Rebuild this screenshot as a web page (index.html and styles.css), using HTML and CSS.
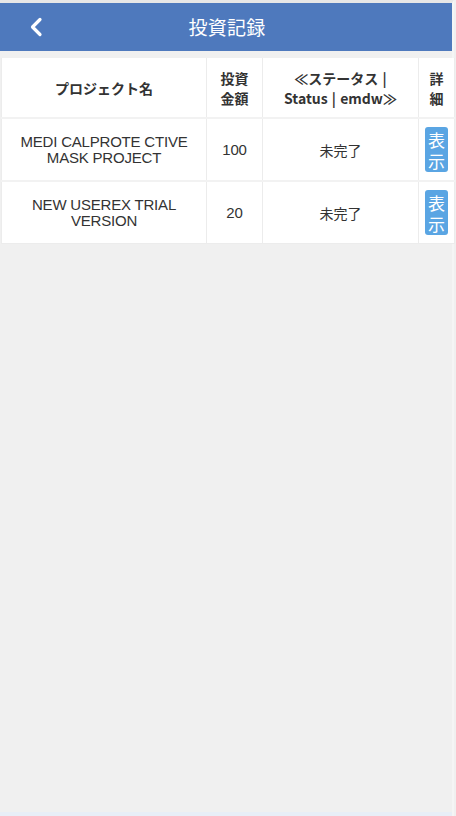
FILE: index.html
```html
<!DOCTYPE html>
<html lang="ja">
<head>
<meta charset="utf-8">
<title>投資記録</title>
<link rel="stylesheet" href="styles.css">
</head>
<body>
<div class="page">
  <header class="appbar">
    <a class="back" href="#" aria-label="戻る">
      <svg width="14" height="20" viewBox="0 0 14 20"><path d="M11 2.5 L3.5 10 L11 17.5" fill="none" stroke="#fff" stroke-width="3.2" stroke-linecap="round" stroke-linejoin="round"/></svg>
    </a>
    <h1 class="title">投資記録</h1>
  </header>
  <main class="content">
    <table class="records">
      <colgroup>
        <col class="c-name"><col class="c-amount"><col class="c-status"><col class="c-detail">
      </colgroup>
      <thead>
        <tr>
          <th>プロジェクト名</th>
          <th>投資<br>金額</th>
          <th class="status-head">≪ステータス | Status | emdw≫</th>
          <th>詳<br>細</th>
        </tr>
      </thead>
      <tbody>
        <tr>
          <td class="latin">MEDI CALPROTE CTIVE MASK PROJECT</td>
          <td class="latin">100</td>
          <td class="jp">未完了</td>
          <td class="btn-cell"><a class="btn" href="#">表示</a></td>
        </tr>
        <tr>
          <td class="latin">NEW USEREX TRIAL VERSION</td>
          <td class="latin">20</td>
          <td class="jp">未完了</td>
          <td class="btn-cell"><a class="btn" href="#">表示</a></td>
        </tr>
      </tbody>
    </table>
  </main>
  <div class="footer-strip"></div>
</div>
</body>
</html>
```

FILE: styles.css
```css
html, body {
  margin: 0;
  padding: 0;
  height: 100%;
}
body {
  background: #f0f0f0;
  font-family: "Liberation Sans", "Noto Sans CJK JP", sans-serif;
  color: #333;
}
.page {
  width: 454px;
  height: 816px;
  display: flex;
  flex-direction: column;
  border-top: 3px solid #e7e7e7;
  box-sizing: border-box;
  border-right: 2px solid #f5f5f5;
}
.appbar {
  height: 48px;
  background: #4e79bd;
  display: flex;
  align-items: center;
  position: relative;
  flex: none;
}
.back {
  position: absolute;
  left: 29px;
  top: 14px;
  display: block;
  line-height: 0;
}
.title {
  margin: 0;
  width: 100%;
  text-align: center;
  color: #fff;
  font-family: "Noto Sans CJK JP", sans-serif;
  font-weight: 400;
  font-size: 19px;
  letter-spacing: 0.3px;
  padding-left: 2px;
  margin-top: -2px;
}
.content {
  flex: 1;
  padding: 7px 0 0 1px;
}
.records {
  width: 453px;
  border-collapse: collapse;
  background: #fff;
  table-layout: fixed;
}
.c-name { width: 205px; }
.c-amount { width: 56px; }
.c-status { width: 156px; }
.c-detail { width: 36px; }
.records th, .records td {
  border: 1px solid #ececec;
  border-top: 2px solid #f2f2f2;
  text-align: center;
  vertical-align: middle;
  padding: 8px 3px;
}
.records tr:first-child th { border-top: none; }
.records th {
  font-family: "Noto Sans CJK JP", sans-serif;
  font-weight: 700;
  font-size: 14px;
  line-height: 20px;
  color: #333;
  height: 43px;
}
.records th.status-head {
  padding: 8px 10px;
  word-spacing: 1px;
}
.records td {
  font-size: 15px;
  line-height: 16px;
  color: #333;
  height: 44px;
}
.records td.latin {
  font-family: "Liberation Sans", sans-serif;
  letter-spacing: -0.2px;
}
.records td.jp {
  font-family: "Noto Sans CJK JP", sans-serif;
  font-size: 14px;
}
.records td.btn-cell {
  padding: 8px 0;
}
.btn {
  display: inline-block;
  width: 23px;
  background: #5aa5e3;
  color: #fff;
  text-decoration: none;
  font-family: "Noto Sans CJK JP", sans-serif;
  font-size: 17px;
  line-height: 21px;
  padding: 2px 0 1px;
  border-radius: 3px;
  word-break: break-all;
}
.footer-strip {
  height: 4px;
  background: #e8eef7;
  flex: none;
}
```
